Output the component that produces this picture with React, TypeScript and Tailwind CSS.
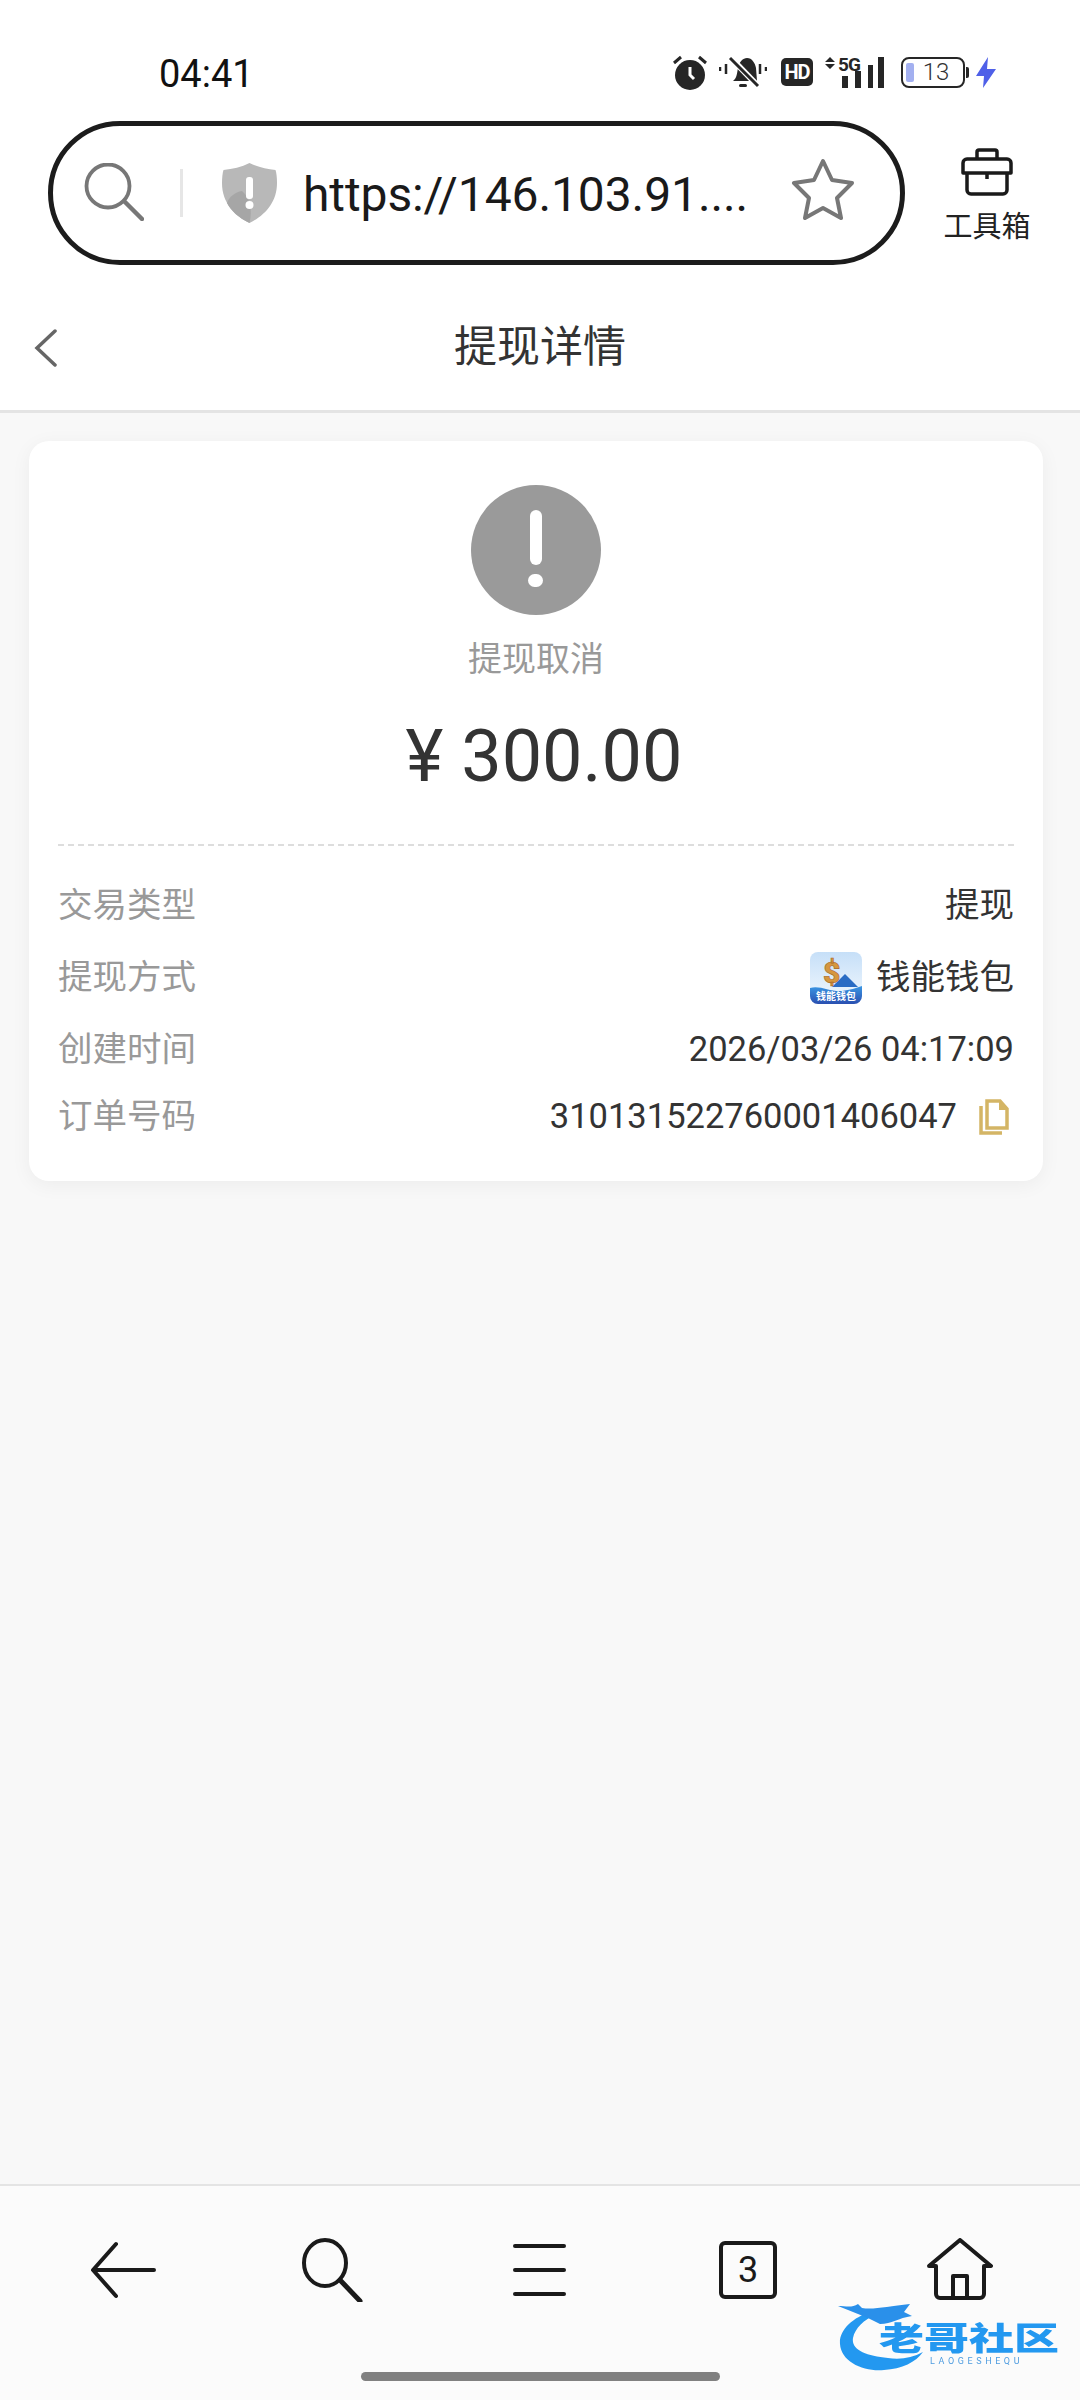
import React from "react";

const font = "font-['Roboto','Noto_Sans_CJK_SC',sans-serif]";

function StatusIcons() {
  return (
    <div className="flex items-center mr-[84px] h-[34px]">
      {/* alarm */}
      <svg width="34" height="35" viewBox="0 0 34 35" className="mr-[12px]">
        <circle cx="17" cy="20" r="15" fill="#262626" />
        <path d="M17 12v8l4 4" stroke="#fff" strokeWidth="3" fill="none" />
        <path d="M1 8l7-6M33 8l-7-6" stroke="#262626" strokeWidth="3" />
      </svg>
      {/* muted bell */}
      <svg width="48" height="34" viewBox="0 0 48 34" className="mr-[14px]">
        <path d="M14 26c4-3 4-8 5-13 1-6 5-10 9-10 5 0 8 5 9 10l1 13z" fill="#262626" />
        <rect x="20" y="29" width="8" height="3" rx="1.5" fill="#262626" />
        <path d="M12 3l28 29" stroke="#fff" strokeWidth="6" />
        <path d="M11 3l28 28" stroke="#262626" strokeWidth="3" />
        <path d="M1 12v4M7 9v10M41 9v10M47 12v4" stroke="#262626" strokeWidth="2.5" />
      </svg>
      <div className="w-[32px] h-[28px] mr-[12px] rounded-[5px] bg-[#262626] flex items-center justify-center text-white text-[20px] font-bold tracking-[-1px] leading-none">
        HD
      </div>
      {/* 5G signal */}
      <div className="relative w-[60px] h-[33px] mr-[16px]">
        <svg width="60" height="33" viewBox="0 0 60 33" className="absolute inset-0">
          <path d="M5 1l5 5H0zM5 13l5-5H0z" fill="#262626" />
          <rect x="17" y="20" width="6" height="12" fill="#262626" />
          <rect x="30" y="15" width="6" height="17" fill="#262626" />
          <rect x="43" y="9" width="5" height="23" fill="#262626" />
          <rect x="53" y="1" width="6" height="31" fill="#262626" />
        </svg>
        <span className="absolute left-[13px] top-[-1px] text-[19px] font-bold tracking-[-1px] leading-[19px] text-[#262626]">
          5G
        </span>
      </div>
      {/* battery */}
      <div className="relative w-[64px] h-[31px] mr-[1px] rounded-[8px] border-2 border-[#262626] flex items-center justify-center">
        <div className="absolute left-[3px] top-[4px] bottom-[4px] w-[8px] rounded-[2px] bg-[#a3b0f0]" />
        <span className="ml-[6px] text-[24px] leading-none font-light text-[#333]">13</span>
      </div>
      <div className="w-[3px] h-[11px] mr-[7px] bg-[#262626] rounded-r-[2px]" />
      <svg width="20" height="31" viewBox="0 0 20 31">
        <path d="M12 0L0 19h8L7 31l13-19h-9z" fill="#4f60e8" />
      </svg>
    </div>
  );
}

function UrlBar() {
  return (
    <div className="w-[857px] h-[144px] rounded-full border-[5px] border-[#1c1c1c] bg-white flex items-center box-border">
      <svg width="60" height="58" viewBox="0 0 60 58" className="ml-[31px] mb-[2px]">
        <circle cx="24" cy="23" r="21.5" fill="none" stroke="#777" strokeWidth="3.8" />
        <path d="M41 39l17 17" stroke="#777" strokeWidth="4.5" strokeLinecap="round" />
      </svg>
      <div className="ml-[36px] w-[3px] h-[48px] bg-[#e6e6e6]" />
      <svg width="55" height="60" viewBox="0 0 55 60" className="ml-[39px]">
        <path d="M27.5 0c8 4 17 6 26 7 1 3 1.500 8 1.500 13 0 20-13 33-27.500 40C13 53 0 40 0 20 0 15 .5 10 1.500 7c9-1 18-3 26-7z" fill="#b8b8b8" />
        <path d="M27.500 60C17 55 9 48 5 40c2-6 8-11 15-12 7 6 11 18 7.500 32z" fill="#a6a6a6" />
        <rect x="24" y="14" width="7" height="22" rx="3" fill="#fff" />
        <circle cx="27.500" cy="42" r="4" fill="#fff" />
      </svg>
      <span className="ml-[26px] mt-[4px] w-[460px] text-[48px] leading-none text-[#1a1a1a] tracking-[-0.1px] whitespace-nowrap">
        https://146.103.91....
      </span>
      <svg width="64" height="62" viewBox="0 0 64 62" className="ml-[28px] mb-[8px]">
        <path
          d="M32 3l9 19 20 3-15 15 4 20-18-10-18 10 4-20L3 25l20-3z"
          fill="none"
          stroke="#777"
          strokeWidth="4"
          strokeLinejoin="round"
        />
      </svg>
    </div>
  );
}

function Row({ label, h, children }: { label: string; h: string; children: React.ReactNode }) {
  return (
    <div className={`flex items-center justify-between ${h}`}>
      <span className="text-[#999]">{label}</span>
      <div className="flex items-center text-[#333]">{children}</div>
    </div>
  );
}

function WalletLogo() {
  return (
    <svg width="52" height="52" viewBox="0 0 52 52" className="mr-[14px]">
      <defs>
        <linearGradient id="sky" x1="0" y1="0" x2="0" y2="1">
          <stop offset="0" stopColor="#c6dff8" />
          <stop offset="1" stopColor="#f4f9fe" />
        </linearGradient>
        <linearGradient id="sea" x1="0" y1="0" x2="0" y2="1">
          <stop offset="0" stopColor="#3b97e4" />
          <stop offset="1" stopColor="#2a4fb0" />
        </linearGradient>
      </defs>
      <rect width="52" height="52" rx="8" fill="url(#sky)" />
      <path d="M0 36c10-3 20 4 32 3 8-1 14-3 20-5v10a8 8 0 0 1-8 8H8a8 8 0 0 1-8-8z" fill="url(#sea)" />
      <path d="M22 35l26 0-13-13z" fill="#2a6cc4" />
      <text x="13" y="31" fontSize="30" fontWeight="900" fill="#d6973f" stroke="#a9682a" strokeWidth="0.6">
        $
      </text>
      <text x="26" y="48" textAnchor="middle" fontSize="10" fontWeight="700" fill="#fff">
        钱能钱包
      </text>
    </svg>
  );
}

function Watermark() {
  return (
    <div className="absolute left-[838px] top-[2298px] w-[226px] h-[76px] blur-[0.5px]">
      <svg width="120" height="76" viewBox="0 0 120 76" className="absolute inset-0">
        <path
          d="M34 13C14 20 1 32 2 46c1 18 24 28 44 26 18-1 32-8 39-18-11 6-23 8-35 6C28 58 13 52 15 40c2-10 11-18 23-24z"
          fill="#2398f0"
        />
        <path
          d="M0 8c8 0 14 2 20-2l4 4c12 2 26-2 48-4l-6 8 8 4c-14 2-20 8-32 8l-12-6C20 16 10 12 0 8z"
          fill="#2a90ea"
        />
      </svg>
      <span className="absolute left-[41px] top-[23px] text-[45px] leading-[36px] font-black text-[#2398f0] whitespace-nowrap scale-y-[0.72]">
        老哥社区
      </span>
      <span className="absolute left-[92px] top-[59px] text-[9px] leading-[9px] tracking-[3.6px] text-[#4f9de0] whitespace-nowrap">
        LAOGESHEQU
      </span>
    </div>
  );
}

export default function App() {
  return (
    <div className={`relative w-[1080px] h-[2400px] flex flex-col bg-[#f8f8f8] overflow-hidden ${font}`}>
      <div className="bg-white">
        {/* status bar */}
        <div className="h-[121px] pt-[55px] flex items-start justify-between">
          <span className="ml-[159px] text-[38px] leading-[38px] text-[#111]">04:41</span>
          <StatusIcons />
        </div>

        {/* browser address row */}
        <div className="h-[144px] pl-[48px] flex items-center">
          <UrlBar />
          <div className="ml-[37px] mt-[5px] w-[90px] flex flex-col items-center">
            <svg width="54" height="48" viewBox="0 0 54 48">
              <path
                d="M17 11V4a2 2 0 0 1 2-2h16a2 2 0 0 1 2 2v7M3 25v-10a4 4 0 0 1 4-4h40a4 4 0 0 1 4 4v10zM7 25v17a4 4 0 0 0 4 4h32a4 4 0 0 0 4-4V25M27 25v6"
                fill="none"
                stroke="#1a1a1a"
                strokeWidth="3.5"
                strokeLinejoin="round"
              />
            </svg>
            <span className="mt-[14px] text-[29px] leading-[34px] text-[#222] whitespace-nowrap">工具箱</span>
          </div>
        </div>

        {/* page title */}
        <div className="relative h-[148px] border-b-[3px] border-[#e4e4e4] flex items-center justify-center pt-[18px]">
          <svg width="24" height="38" viewBox="0 0 24 38" className="absolute left-[34px] top-[64px]">
            <path d="M21 2L3 19l18 17" fill="none" stroke="#666" strokeWidth="3.5" strokeLinecap="round" />
          </svg>
          <span className="text-[43px] leading-[56px] text-[#333]">提现详情</span>
        </div>
      </div>

      {/* detail card */}
      <div className="mt-[28px] ml-[29px] w-[1014px] h-[740px] pt-[44px] px-[29px] bg-white rounded-[20px] shadow-[0_4px_20px_rgba(0,0,0,0.05)]">
        <div className="flex flex-col items-center">
          <div className="relative w-[130px] h-[130px] rounded-full bg-[#9a9a9a]">
            <div className="absolute left-[59px] top-[25px] w-[12px] h-[55px] rounded-full bg-white" />
            <div className="absolute left-[57px] top-[89px] w-[15px] h-[13px] rounded-full bg-white" />
          </div>
          <span className="mt-[22px] text-[34px] leading-[44px] text-[#999]">提现取消</span>
          <span className="mt-[36px] ml-[16px] text-[72px] leading-[80px] text-[#333]">¥ 300.00</span>
        </div>
        <div className="mt-[47px] border-t-2 border-dashed border-[#ddd]" />
        <div className="mt-[24px] text-[34.5px]">
          <Row label="交易类型" h="h-[72px]">提现</Row>
          <Row label="提现方式" h="h-[72px]">
            <WalletLogo />
            钱能钱包
          </Row>
          <Row label="创建时间" h="h-[72px]">2026/03/26 04:17:09</Row>
          <Row label="订单号码" h="h-[62px]">
            310131522760001406047
            <svg width="30" height="36" viewBox="0 0 30 36" className="ml-[22px] mr-[5px]">
              <path d="M2 7v27h21" fill="none" stroke="#d4b565" strokeWidth="3.5" />
              <path d="M8 2h13l7 8v19H8z" fill="none" stroke="#d4b565" strokeWidth="3.5" />
              <path d="M20 1l9 10h-9z" fill="#d4b565" />
            </svg>
          </Row>
        </div>
      </div>

      {/* browser bottom bar */}
      <div className="mt-auto h-[216px] border-t-2 border-[#e4e4e4] bg-[#fbfbfb] flex flex-col">
        <div className="mt-[52px] h-[64px] flex items-center">
          <svg width="66" height="58" viewBox="0 0 66 58" className="ml-[90px]">
            <path d="M64 29H4M26 3L3 29l23 26" fill="none" stroke="#1a1a1a" strokeWidth="4" strokeLinecap="round" strokeLinejoin="round" />
          </svg>
          <svg width="64" height="64" viewBox="0 0 64 64" className="ml-[144px]">
            <ellipse cx="25" cy="25" rx="21" ry="23" fill="none" stroke="#1a1a1a" strokeWidth="4" />
            <path d="M40 42l20 21" stroke="#1a1a1a" strokeWidth="5" strokeLinecap="round" />
          </svg>
          <div className="ml-[149px] w-[53px] h-[52px] flex flex-col justify-between">
            <div className="h-[4px] rounded-full bg-[#1a1a1a]" />
            <div className="h-[4px] rounded-full bg-[#1a1a1a]" />
            <div className="h-[4px] rounded-full bg-[#1a1a1a]" />
          </div>
          <div className="ml-[153px] w-[58px] h-[58px] rounded-[6px] border-4 border-[#1a1a1a] flex items-center justify-center text-[36px] text-[#1a1a1a] leading-none">
            3
          </div>
          <svg width="66" height="64" viewBox="0 0 66 64" className="ml-[150px]">
            <path
              d="M2 28L33 2l31 26h-7v28a4 4 0 0 1-4 4H13a4 4 0 0 1-4-4V28zM26 60V38h14v22"
              fill="none"
              stroke="#1a1a1a"
              strokeWidth="4"
              strokeLinejoin="round"
            />
          </svg>
        </div>
        <div className="mt-[70px] ml-[361px] w-[359px] h-[9px] rounded-full bg-[#808080]" />
      </div>

      <Watermark />
    </div>
  );
}
